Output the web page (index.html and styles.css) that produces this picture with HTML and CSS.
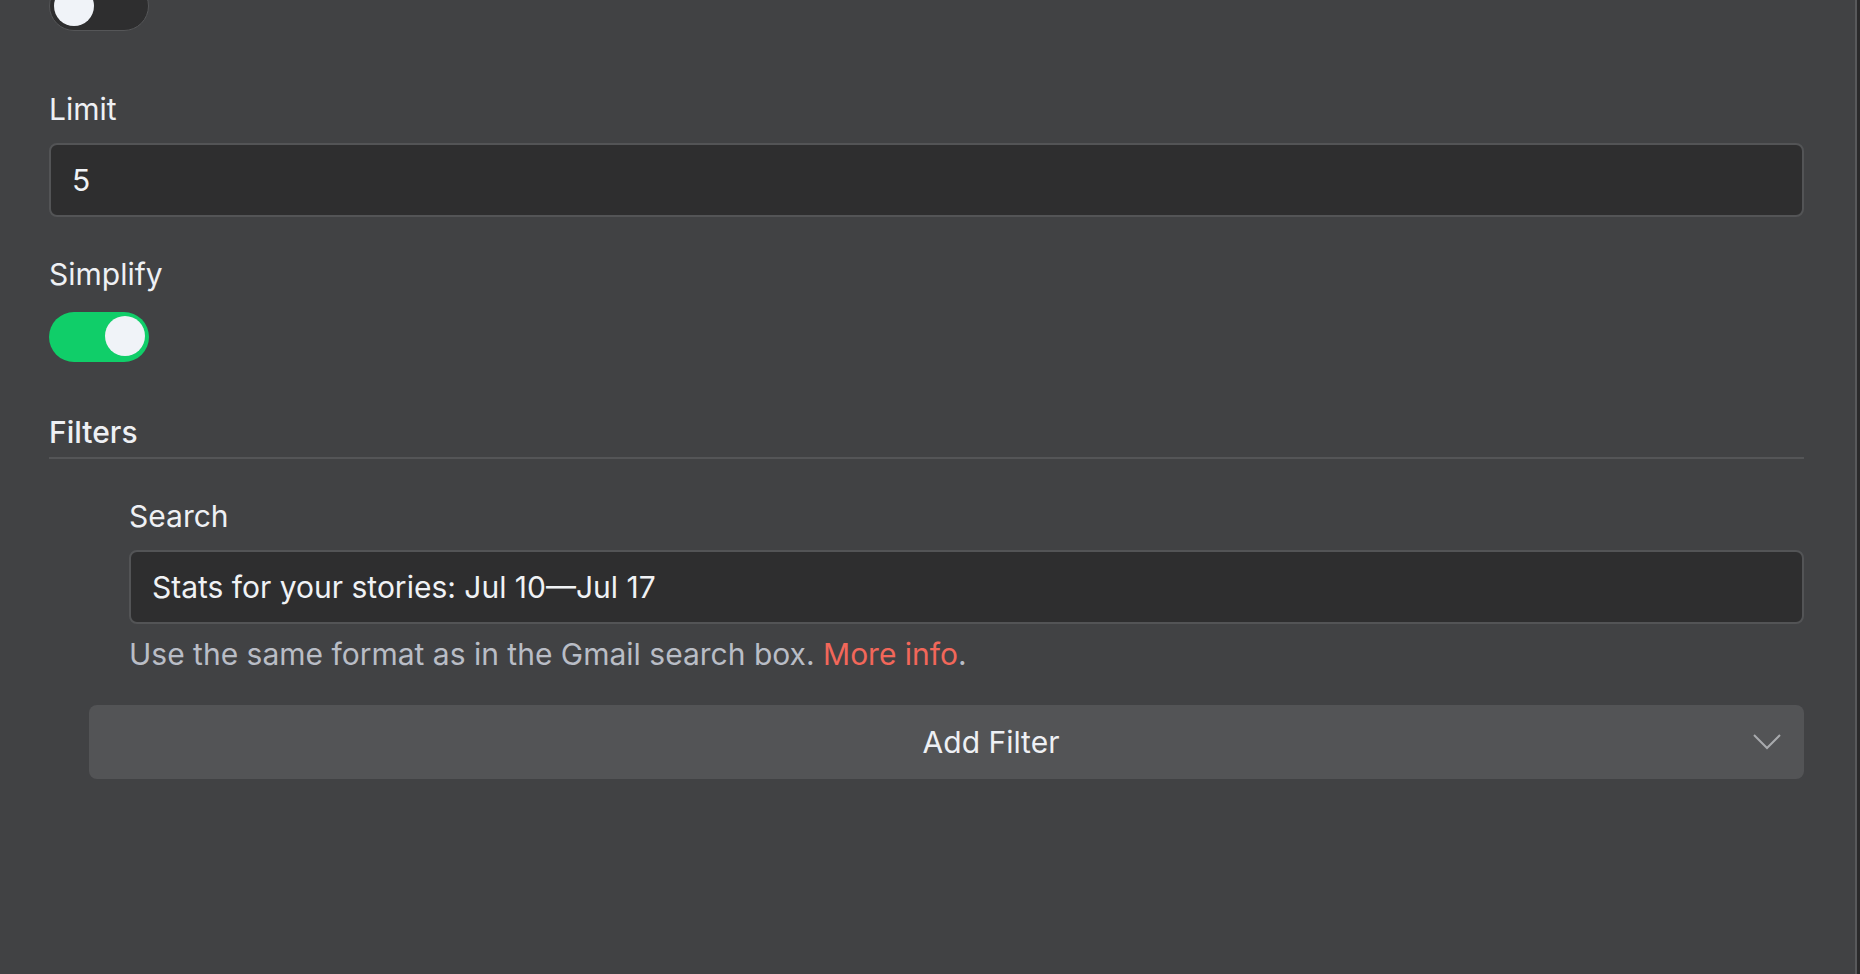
FILE: index.html
```html
<!DOCTYPE html>
<html lang="en">
<head>
<meta charset="utf-8">
<title>Settings</title>
<link rel="stylesheet" href="styles.css">
</head>
<body>
<div class="panel">
  <div class="toggle toggle-off first"><span class="knob"></span></div>

  <div class="field-label limit-label">Limit</div>
  <div class="input limit-input">5</div>

  <div class="field-label simplify-label">Simplify</div>
  <div class="toggle toggle-on"><span class="knob"></span></div>

  <div class="section-title">Filters</div>

  <div class="filters">
    <div class="field-label search-label">Search</div>
    <div class="input search-input">Stats for your stories: Jul 10—Jul 17</div>
    <div class="help">Use the same format as in the Gmail search box. <span class="link">More info</span>.</div>
  </div>

  <div class="add-filter">
    <span class="add-text">Add Filter</span>
    <svg class="chevron" width="28" height="16" viewBox="0 0 28 16"><polyline points="1,1 14,14 27,1" fill="none" stroke="#a8aaad" stroke-width="2"/></svg>
  </div>
</div>
</body>
</html>
```
FILE: styles.css
```css
html, body {
  margin: 0;
  padding: 0;
  height: 100%;
}
body {
  background: #2a2a2b;
  font-family: Inter, "Noto Sans", sans-serif;
  font-size: 30px;
  line-height: 45px;
  color: #eef0f4;
  overflow: hidden;
}
.panel {
  box-sizing: border-box;
  height: 100%;
  margin-right: 3px;
  border-right: 2px solid #58595b;
  background: #414244;
  padding: 0 51px 0 49px;
  display: flex;
  flex-direction: column;
  align-items: stretch;
}
.toggle {
  box-sizing: border-box;
  width: 100px;
  height: 50px;
  border-radius: 25px;
  position: relative;
  flex: none;
}
.toggle .knob {
  position: absolute;
  top: 5px;
  width: 40px;
  height: 40px;
  border-radius: 50%;
  background: #f0f3f8;
}
.toggle-off {
  background: #2e2e2f;
  border: 1.5px solid #555658;
}
.toggle-off .knob {
  left: 4px;
  top: 3.5px;
}
.toggle-on {
  background: #10ce69;
  margin-top: 15px;
}
.toggle-on .knob {
  right: 4px;
  top: 4px;
}
.first {
  margin-top: -19px;
}
.field-label {
  font-weight: 400;
}
.limit-label {
  margin-top: 56px;
}
.input {
  box-sizing: border-box;
  height: 74px;
  background: #2e2e2f;
  border: 2px solid #535456;
  border-radius: 8px;
  padding: 0 21px;
  display: flex;
  align-items: center;
  color: #f0f2f5;
}
.limit-input {
  margin-top: 11px;
}
.simplify-label {
  margin-top: 35px;
}
.section-title {
  margin-top: 48px;
  padding-bottom: 2px;
  border-bottom: 2px solid #545557;
  font-weight: 500;
}
.filters {
  padding-left: 80px;
  display: flex;
  flex-direction: column;
}
.search-label {
  margin-top: 35px;
}
.search-input {
  margin-top: 11px;
}
.help {
  margin-top: 8px;
  color: #b9bdc6;
}
.link {
  color: #f2675a;
}
.add-filter {
  box-sizing: border-box;
  margin-top: 28px;
  margin-left: 40px;
  height: 74px;
  background: #535456;
  border-radius: 8px;
  display: flex;
  align-items: center;
  padding: 0 23px 0 88px;
  color: #eef0f4;
}
.add-text {
  flex: 1;
  text-align: center;
  padding-left: 52px;
}
.chevron {
  flex: none;
  display: block;
}
```
